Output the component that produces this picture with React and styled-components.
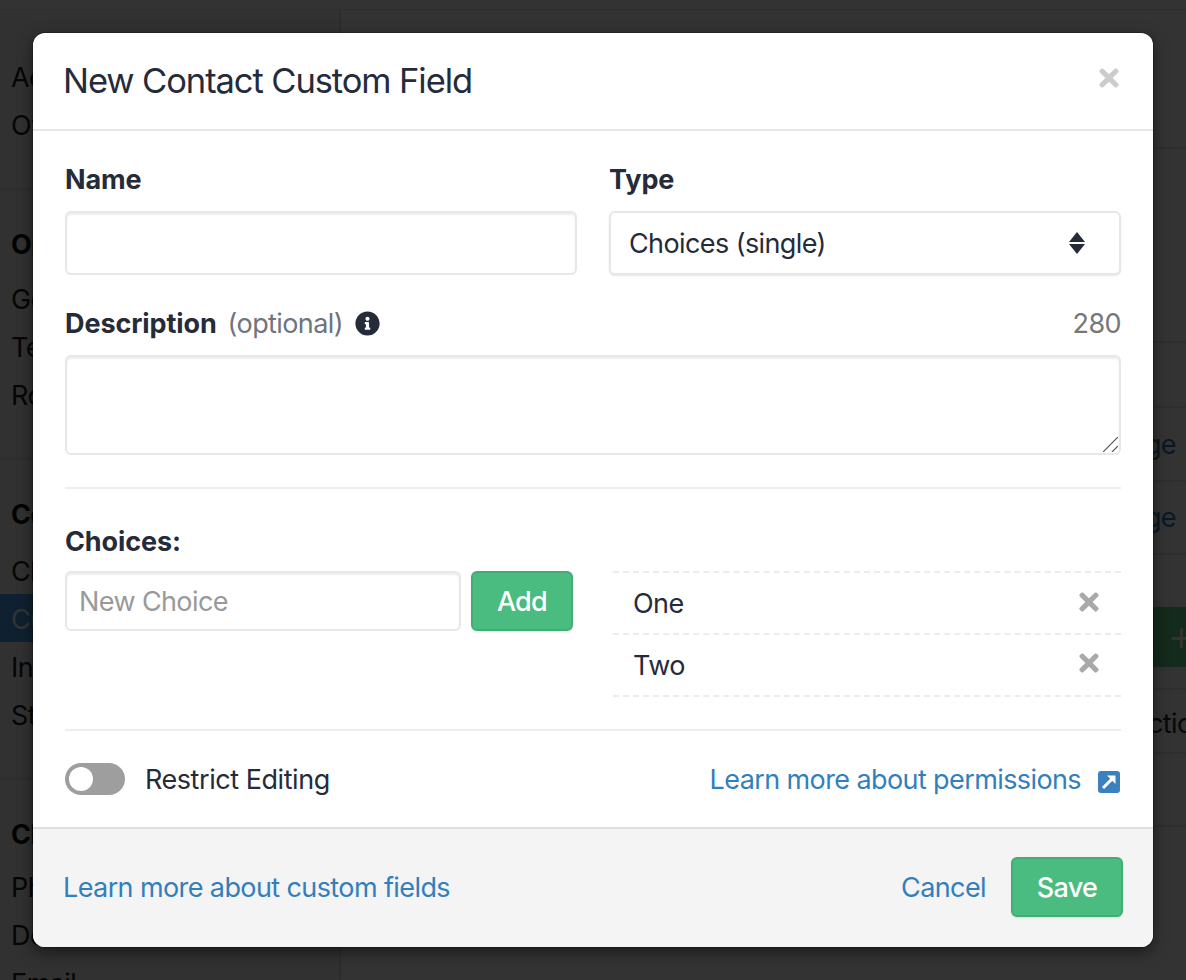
import React from "react";
import styled, { createGlobalStyle } from "styled-components";
import { FaTimes, FaInfoCircle } from "react-icons/fa";

const Global = createGlobalStyle`
  html, body { margin: 0; padding: 0; }
  body {
    font-family: Inter, "Liberation Sans", sans-serif;
    color: #262b3a;
    font-size: 27px;
    letter-spacing: -0.6px;
  }
  * { box-sizing: border-box; }
`;

// page that sits behind the modal
const Page = styled.div`
  position: relative;
  width: 1186px;
  height: 980px;
  overflow: hidden;
  background: #fff;
`;
const TopBar = styled.div`
  height: 10px;
  background: #fff;
  border-bottom: 1px solid #e4e4e4;
`;
const Columns = styled.div`
  display: flex;
`;
const Sidebar = styled.div`
  width: 341px;
  flex: none;
  background: #f2f2f2;
  border-right: 2px solid #e0e0e0;
  height: 970px;
`;
const NavSection = styled.div`
  padding: ${(p) => p.$top}px 0 40px;
  border-bottom: 2px solid #e0e0e0;
  &:last-child { border-bottom: 0; }
`;
const NavHeading = styled.div`
  height: 48px;
  line-height: 48px;
  padding-left: 11px;
  font-weight: 700;
  margin-bottom: ${(p) => p.$gap}px;
  color: #111;
`;
const NavItem = styled.div`
  height: 48px;
  line-height: 52px;
  padding-left: 11px;
  white-space: nowrap;
  background: ${(p) => (p.$active ? "#4aa6f0" : "transparent")};
  color: ${(p) => (p.$active ? "#fff" : "#222")};
`;
const Main = styled.div`
  flex: 1;
  min-width: 0;
`;
const MainRow = styled.div`
  height: ${(p) => p.$h}px;
  display: flex;
  align-items: center;
  justify-content: ${(p) => (p.$start ? "flex-start" : "flex-end")};
  padding: ${(p) => (p.$pad ? `${p.$pad}` : "0 10px 0 0")};
  border-bottom: 2px solid #e6e6e6;
  white-space: nowrap;
`;
const MainLink = styled.span`
  color: #2f78b4;
`;
const AddButton = styled.div`
  width: 100px;
  height: 60px;
  margin-top: 30px;
  flex: none;
  background: #62cf8e;
  border-radius: 6px;
  color: #fff;
  font-size: 44px;
  font-weight: 300;
  line-height: 56px;
  padding-left: 18px;
`;

const Backdrop = styled.div`
  position: absolute;
  inset: 0;
  background: rgba(0, 0, 0, 0.8);
`;

// modal
const Modal = styled.div`
  position: absolute;
  left: 33px;
  top: 33px;
  width: 1120px;
  height: 914px;
  display: flex;
  flex-direction: column;
  background: #fff;
  border-radius: 12px;
  box-shadow: 0 0 0 1px rgba(0, 0, 0, 0.2), 0 5px 15px rgba(0, 0, 0, 0.5);
  overflow: hidden;
`;
const Header = styled.div`
  height: 98px;
  flex: none;
  display: flex;
  align-items: center;
  justify-content: space-between;
  padding: 0 34px 2px 30px;
  border-bottom: 2px solid #e5e5e5;
`;
const Title = styled.h4`
  margin: 0;
  font-size: 34.5px;
  font-weight: 400;
  letter-spacing: -1.08px;
`;
const CloseIcon = styled(FaTimes)`
  width: 20px;
  height: 28px;
  margin-bottom: 4px;
  color: ${(p) => p.$color};
  flex: none;
`;
const Body = styled.div`
  flex: 1;
  padding: 32px 32px 0;
`;
const TwoCols = styled.div`
  display: grid;
  grid-template-columns: 1fr 1fr;
  column-gap: ${(p) => p.$gap}px;
`;
const Label = styled.label`
  display: block;
  height: 32px;
  line-height: 34px;
  margin-bottom: ${(p) => p.$mb || 16}px;
  font-weight: 700;
  letter-spacing: -0.1px;
`;
const LabelRow = styled.div`
  display: flex;
  align-items: center;
  justify-content: space-between;
  height: 32px;
  margin: 32px 0 16px;
`;
const LabelLeft = styled.div`
  display: flex;
  align-items: center;
`;
const LabelStrong = styled.strong`
  letter-spacing: -0.1px;
`;
const Optional = styled.span`
  margin-left: 11px;
  color: #6f7480;
`;
const InfoIcon = styled(FaInfoCircle)`
  width: 25px;
  height: 25px;
  margin-left: 12px;
  color: #262b3a;
`;
const Counter = styled.span`
  color: #777;
`;
const fieldStyles = `
  display: block;
  width: 100%;
  background: #fff;
  border: 2px solid #e6e7e9;
  border-radius: 6px;
  font-family: inherit;
  font-size: 27px;
  letter-spacing: -0.6px;
  color: #262b3a;
  outline: none;
`;
const TextInput = styled.input`
  ${fieldStyles}
  height: ${(p) => p.$h}px;
  padding: 0 12px;
  box-shadow: inset 0 2px 2px rgba(0, 0, 0, 0.07);
  &::placeholder { color: #999; opacity: 1; }
`;
const SelectWrap = styled.div`
  position: relative;
`;
const Select = styled.select`
  ${fieldStyles}
  height: 64px;
  padding: 0 18px;
  appearance: none;
  box-shadow: 0 1px 2px rgba(0, 0, 0, 0.1);
`;
const SelectArrows = styled.svg`
  position: absolute;
  right: 36px;
  top: 21px;
  width: 16px;
  height: 22px;
  pointer-events: none;
`;
const TextAreaWrap = styled.div`
  position: relative;
`;
const TextArea = styled.textarea`
  ${fieldStyles}
  height: 100px;
  padding: 10px 12px;
  resize: none;
  box-shadow: inset 0 2px 2px rgba(0, 0, 0, 0.07);
`;
const ResizeGrip = styled.svg`
  position: absolute;
  right: 3px;
  bottom: 3px;
  width: 15px;
  height: 15px;
  pointer-events: none;
`;
const Divider = styled.hr`
  margin: ${(p) => p.$top}px 0 ${(p) => p.$bottom}px;
  height: 2px;
  border: 0;
  background: #eeeeee;
`;
const ChoiceForm = styled.div`
  display: flex;
  gap: 10px;
  align-items: flex-start;
`;
const GreenButton = styled.button`
  flex: none;
  width: ${(p) => p.$w}px;
  height: 60px;
  background: #4abc7f;
  border: 2px solid #43ad74;
  border-radius: 6px;
  box-shadow: 0 1px 2px rgba(0, 0, 0, 0.1);
  color: #fff;
  font-family: inherit;
  font-size: 27px;
  font-weight: 500;
  letter-spacing: -0.7px;
  padding: 0;
`;
const ChoiceList = styled.div`
  margin-top: 46px;
`;
const ChoiceItem = styled.div`
  height: 62px;
  display: flex;
  align-items: center;
  justify-content: space-between;
  padding: 1px 22px 0 20px;
  border-top: 2px dashed #ececec;
  &:last-child {
    height: 64px;
    padding-top: 2px;
    padding-bottom: 2px;
    border-bottom: 2px dashed #ececec;
  }
`;
const RestrictRow = styled.div`
  display: flex;
  align-items: center;
  justify-content: space-between;
  height: 32px;
`;
const RestrictLeft = styled.div`
  display: flex;
  align-items: center;
  gap: 20px;
  letter-spacing: -0.45px;
`;
const Toggle = styled.div`
  width: 60px;
  height: 32px;
  padding: 4px;
  border-radius: 16px;
  background: #9e9e9e;
`;
const Knob = styled.div`
  width: 24px;
  height: 24px;
  border-radius: 50%;
  background: #fff;
`;
const Link = styled.a`
  color: #337fbb;
  text-decoration: none;
`;
const LinkRow = styled.div`
  display: flex;
  align-items: center;
  gap: 17px;
  margin-right: 1px;
`;
const ExternalIcon = styled.svg`
  width: 22px;
  height: 22px;
  margin-top: 6px;
`;
const Footer = styled.div`
  height: 120px;
  flex: none;
  display: flex;
  align-items: center;
  justify-content: space-between;
  padding: 0 30px 2px 30px;
  background: #f4f4f4;
  border-top: 2px solid #dedede;
`;
const FooterActions = styled.div`
  display: flex;
  align-items: center;
  gap: 25px;
`;

export default function App() {
  return (
    <Page>
      <Global />
      <TopBar />
      <Columns>
        <Sidebar>
          <NavSection $top={42}>
            <NavItem>Account</NavItem>
            <NavItem>Overview</NavItem>
          </NavSection>
          <NavSection $top={31}>
            <NavHeading $gap={5}>Organization</NavHeading>
            <NavItem>General</NavItem>
            <NavItem>Teams</NavItem>
            <NavItem>Roles</NavItem>
          </NavSection>
          <NavSection $top={31}>
            <NavHeading $gap={7}>Contacts</NavHeading>
            <NavItem>Channels</NavItem>
            <NavItem $active>Custom Fields</NavItem>
            <NavItem>Integrations</NavItem>
            <NavItem>Statuses</NavItem>
          </NavSection>
          <NavSection $top={31}>
            <NavHeading $gap={3}>Channels</NavHeading>
            <NavItem>Phone</NavItem>
            <NavItem>Domain</NavItem>
            <NavItem>Email</NavItem>
          </NavSection>
        </Sidebar>
        <Main>
          <MainRow $h={139} />
          <MainRow $h={194} />
          <MainRow $h={65} />
          <MainRow $h={74}>
            <MainLink>Manage</MainLink>
          </MainRow>
          <MainRow $h={73}>
            <MainLink>Manage</MainLink>
          </MainRow>
          <MainRow $h={135} $start $pad="0 0 0 808px">
            <AddButton>+</AddButton>
          </MainRow>
          <MainRow $h={64} $start $pad="4px 0 0 789px">
            Actions
          </MainRow>
          <MainRow $h={73} />
        </Main>
      </Columns>
      <Backdrop />

      <Modal>
        <Header>
          <Title>New Contact Custom Field</Title>
          <CloseIcon $color="#cccccc" />
        </Header>
        <Body>
          <TwoCols $gap={32}>
            <div>
              <Label>Name</Label>
              <TextInput type="text" $h={64} />
            </div>
            <div>
              <Label>Type</Label>
              <SelectWrap>
                <Select defaultValue="single">
                  <option value="single">Choices (single)</option>
                </Select>
                <SelectArrows viewBox="0 0 16 22">
                  <path d="M8 0 L16 10 L0 10 Z M0 12 L16 12 L8 22 Z" fill="#262b3a" />
                </SelectArrows>
              </SelectWrap>
            </div>
          </TwoCols>
          <LabelRow>
            <LabelLeft>
              <LabelStrong>Description</LabelStrong>
              <Optional>(optional)</Optional>
              <InfoIcon />
            </LabelLeft>
            <Counter>280</Counter>
          </LabelRow>
          <TextAreaWrap>
            <TextArea />
            <ResizeGrip viewBox="0 0 15 15">
              <path d="M0 15 L15 0 M9 15 L15 9" stroke="#555" strokeWidth="1.2" fill="none" />
            </ResizeGrip>
          </TextAreaWrap>
          <Divider $top={32} $bottom={36} />
          <TwoCols $gap={40}>
            <div>
              <Label $mb={14}>Choices:</Label>
              <ChoiceForm>
                <TextInput type="text" placeholder="New Choice" $h={60} />
                <GreenButton $w={102}>Add</GreenButton>
              </ChoiceForm>
            </div>
            <ChoiceList>
              <ChoiceItem>
                One
                <CloseIcon $color="#a9a9a9" />
              </ChoiceItem>
              <ChoiceItem>
                Two
                <CloseIcon $color="#a9a9a9" />
              </ChoiceItem>
            </ChoiceList>
          </TwoCols>
          <Divider $top={32} $bottom={32} />
          <RestrictRow>
            <RestrictLeft>
              <Toggle>
                <Knob />
              </Toggle>
              Restrict Editing
            </RestrictLeft>
            <LinkRow>
              <Link href="#">Learn more about permissions</Link>
              <ExternalIcon viewBox="0 0 22 22">
                <rect width="22" height="22" rx="3" fill="#3a81bd" />
                <path d="M5 17 L15 7" stroke="#fff" strokeWidth="3" />
                <path d="M9 4.5 H17.5 V13 Z" fill="#fff" />
              </ExternalIcon>
            </LinkRow>
          </RestrictRow>
        </Body>
        <Footer>
          <Link href="#">Learn more about custom fields</Link>
          <FooterActions>
            <Link href="#">Cancel</Link>
            <GreenButton $w={112}>Save</GreenButton>
          </FooterActions>
        </Footer>
      </Modal>
    </Page>
  );
}
